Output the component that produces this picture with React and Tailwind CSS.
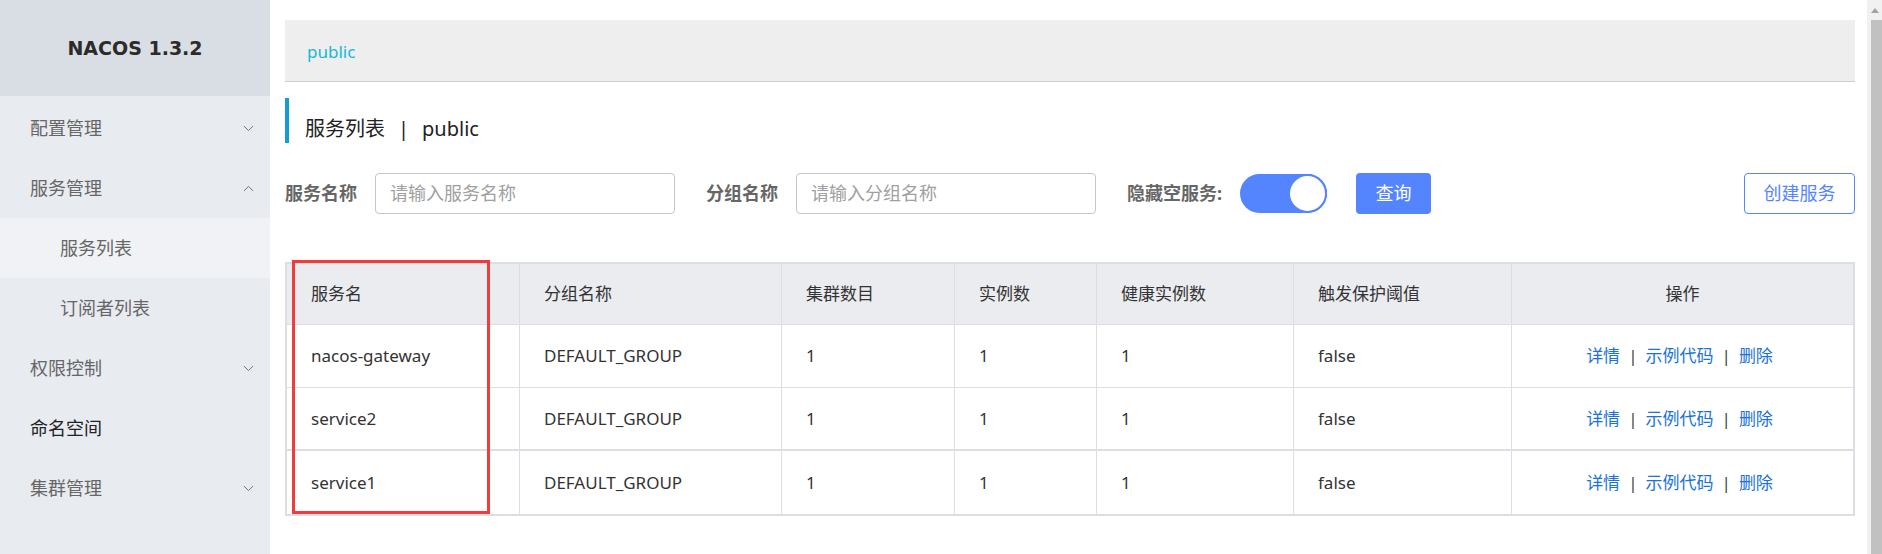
import React from "react";
import { ChevronDown, ChevronUp } from "lucide-react";

const font = { fontFamily: "'Noto Sans', 'Noto Sans CJK SC', sans-serif" };

function MenuItem({ label, open, chevron = true, dark = false }) {
  return (
    <div className="h-[60px] flex items-center justify-between pl-[30px] pr-[13px]">
      <span className={`text-[18px] ${dark ? "text-[#222]" : "text-[#666]"}`}>{label}</span>
      {chevron &&
        (open ? (
          <ChevronUp size={17} strokeWidth={1.4} className="text-[#6f6f6f]" />
        ) : (
          <ChevronDown size={17} strokeWidth={1.4} className="text-[#6f6f6f]" />
        ))}
    </div>
  );
}

function SubItem({ label, active }) {
  return (
    <div className={`h-[60px] flex items-center pl-[60px] ${active ? "bg-[#f0f2f5]" : ""}`}>
      <span className="text-[18px] text-[#666]">{label}</span>
    </div>
  );
}

const cols = "grid grid-cols-[233px_262px_173px_142px_197px_218px_1fr]";

const rows = [
  ["nacos-gateway", "DEFAULT_GROUP", "1", "1", "1", "false"],
  ["service2", "DEFAULT_GROUP", "1", "1", "1", "false"],
  ["service1", "DEFAULT_GROUP", "1", "1", "1", "false"],
];

const headers = ["服务名", "分组名称", "集群数目", "实例数", "健康实例数", "触发保护阈值"];

export default function App() {
  return (
    <div className="flex w-[1882px] h-[554px] bg-white overflow-hidden" style={font}>
      {/* Sidebar */}
      <aside className="w-[270px] shrink-0 h-full bg-[#e8ebf0] flex flex-col">
        <div className="h-[96px] bg-[#d9dde4] flex items-center justify-center">
          <span
            className="text-[19px] font-bold text-[#2b2b2b]"
            style={{ fontFamily: "'DejaVu Sans', sans-serif" }}
          >
            NACOS 1.3.2
          </span>
        </div>
        <div className="pt-[2px]">
          <MenuItem label="配置管理" open={false} />
          <MenuItem label="服务管理" open={true} />
          <SubItem label="服务列表" active />
          <SubItem label="订阅者列表" />
          <MenuItem label="权限控制" open={false} />
          <MenuItem label="命名空间" chevron={false} dark />
          <MenuItem label="集群管理" open={false} />
        </div>
      </aside>

      {/* Main */}
      <main className="flex-1 h-full pt-[20px] pl-[15px] pr-[12px]">
        <div className="h-[62px] bg-[#eeeeee] border-b border-[#cccccc] flex items-center pl-[22px] pt-[2px]">
          <span className="text-[17px] text-[#14b9d6]">public</span>
        </div>

        <div className="mt-[16px] h-[45px] border-l-4 border-[#169bd5] flex items-center pl-[16px]">
          <span className="pt-[16px] text-[20px] text-[#222] leading-none">
            服务列表<span className="mx-[13px]">|</span>public
          </span>
        </div>

        <div className="mt-[30px] h-[41px] flex items-center">
          <span className="text-[18px] font-bold text-[#666] mr-[18px]">服务名称</span>
          <div className="w-[300px] h-[41px] border border-[#c4c6cf] rounded-[4px] flex items-center pl-[14px]">
            <span className="text-[18px] text-[#a0a0a0]">请输入服务名称</span>
          </div>
          <span className="ml-[31px] text-[18px] font-bold text-[#666] mr-[18px]">分组名称</span>
          <div className="w-[300px] h-[41px] border border-[#c4c6cf] rounded-[4px] flex items-center pl-[14px]">
            <span className="text-[18px] text-[#a0a0a0]">请输入分组名称</span>
          </div>
          <span className="ml-[31px] w-[96px] text-[18px] font-bold text-[#666] mr-[17px] whitespace-nowrap">隐藏空服务:</span>
          <div className="w-[87px] h-[39px] rounded-full bg-[#5584ff] flex items-center justify-end">
            <div className="w-[39px] h-[39px] rounded-full bg-white border-2 border-[#5584ff]" />
          </div>
          <div className="ml-[29px] w-[75px] h-[41px] rounded-[4px] bg-[#5584ff] flex items-center justify-center">
            <span className="text-[18px] text-white">查询</span>
          </div>
          <div className="ml-auto w-[111px] h-[41px] rounded-[4px] border border-[#5584ff] flex items-center justify-center">
            <span className="text-[18px] text-[#5584ff]">创建服务</span>
          </div>
        </div>

        {/* Table */}
        <div className="relative mt-[48px] border-2 border-[#dcdee3]">
          <div className={`${cols} h-[61px] bg-[#ebecf0] border-b border-[#dcdee3]`}>
            {headers.map((h) => (
              <div key={h} className="border-r border-[#dcdee3] flex items-center pl-[24px] text-[17px] text-[#333]">
                {h}
              </div>
            ))}
            <div className="flex items-center justify-center text-[17px] text-[#333]">操作</div>
          </div>
          {rows.map((r, i) => (
            <div
              key={i}
              className={`${cols} h-[63px] ${i === 0 ? "border-b border-[#dcdee3]" : i === 1 ? "border-b-2 border-[#dcdee3]" : ""}`}
            >
              {r.map((c, j) => (
                <div key={j} className="border-r border-[#dcdee3] flex items-center pl-[24px] text-[17px] text-[#333]">
                  {c}
                </div>
              ))}
              <div className="flex items-center justify-center text-[17px] pr-[6px]">
                <span className="text-[#1b73d8]">详情</span>
                <span className="mx-[8px] text-[#444]">|</span>
                <span className="text-[#1b73d8]">示例代码</span>
                <span className="mx-[8px] text-[#444]">|</span>
                <span className="text-[#1b73d8]">删除</span>
              </div>
            </div>
          ))}
          <div className="absolute left-[5px] top-[-4px] w-[198px] h-[254px] border-[3px] border-[#f23c3c]" />
        </div>
      </main>

      {/* Scrollbar */}
      <div className="w-[15px] shrink-0 h-full bg-[#f1f1f1] flex flex-col">
        <div className="h-[20px] flex items-center justify-center">
          <div className="w-0 h-0 border-l-[4px] border-r-[4px] border-b-[5px] border-l-transparent border-r-transparent border-b-[#a3a3a3]" />
        </div>
        <div className="flex-1 ml-[4px] bg-[#c1c1c1]" />
      </div>
    </div>
  );
}
